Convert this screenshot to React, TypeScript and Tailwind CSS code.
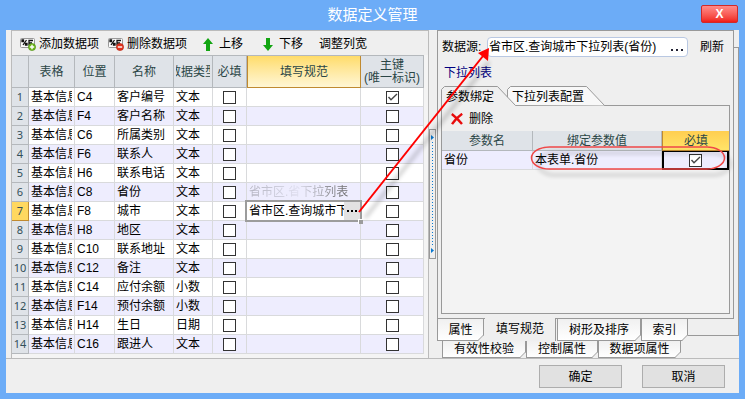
const rows: [string, string, string, boolean][] = [
  ['C4', '客户编号', '文本', true],
  ['F4', '客户名称', '文本', false],
  ['C6', '所属类别', '文本', false],
  ['F6', '联系人', '文本', false],
  ['H6', '联系电话', '文本', false],
  ['C8', '省份', '文本', false],
  ['F8', '城市', '文本', false],
  ['H8', '地区', '文本', false],
  ['C10', '联系地址', '文本', false],
  ['C12', '备注', '文本', false],
  ['C14', '应付余额', '小数', false],
  ['F14', '预付余额', '小数', false],
  ['H14', '生日', '日期', false],
  ['C16', '跟进人', '文本', false],
];

function Check({ label, checked = false }: { label: string; checked?: boolean }) {
  return (
    <label className="mx-auto grid size-[13px]">
      <input
        type="checkbox"
        aria-label={label}
        defaultChecked={checked}
        className="peer size-[13px] appearance-none border border-[#333] bg-white [grid-area:1/1]"
      />
      <svg viewBox="0 0 13 13" className="pointer-events-none hidden size-[13px] [grid-area:1/1] peer-checked:block">
        <path d="M2.5 6 5 8.7 11 3" fill="none" stroke="#444" strokeWidth="1.4" />
      </svg>
    </label>
  );
}

function TableIcon({ kind }: { kind: 'add' | 'remove' }) {
  return (
    <svg width="16" height="13" viewBox="0 0 16 13" className="shrink-0">
      <rect x="0.5" y="0.5" width="14" height="9" rx="1" fill="#fafafa" stroke="#999" />
      <path d="M2 2h1.5v1.5H2zM6.5 2 3 7M5.5 5.5H7V7H5.5zM9 7.5v-5h4M9 5h3" fill="none" stroke="#111" strokeWidth="1.3" />
      <circle cx="12" cy="9" r="3.6" fill={kind === 'add' ? '#6fb51c' : '#e0321c'} stroke={kind === 'add' ? '#4c9010' : '#b8200c'} strokeWidth="0.6" />
      <path d={kind === 'add' ? 'M9.8 9h4.4M12 6.8v4.4' : 'M9.8 9h4.4'} stroke="#fff" strokeWidth="1.4" />
    </svg>
  );
}

function MoveIcon({ down = false }: { down?: boolean }) {
  return (
    <svg width="10" height="13" viewBox="0 0 10 13" className="shrink-0">
      <path d={down ? 'M3 0h4v7h3L5 13 0 7h3z' : 'M3 13h4V6h3L5 0 0 6h3z'} fill="#12a512" />
    </svg>
  );
}

function SplitArrow() {
  return (
    <svg width="3" height="5" viewBox="0 0 3 5">
      <path d="M0 0 3 2.5 0 5z" fill="#0878d0" />
    </svg>
  );
}

function BottomTab({ text, className }: { text: string; className: string }) {
  return (
    <button
      type="button"
      role="tab"
      className={'relative flex shrink-0 items-center justify-center border border-[#999] bg-linear-to-b from-[#f0f0f0] to-white ' + className}
    >
      {text}
      <svg width="6" height="6" viewBox="0 0 6 6" className="absolute -right-px -bottom-px">
        <path d="M6 0v6H0z" fill="#efefef" />
        <path d="M5.5 0 0 5.5" stroke="#999" />
      </svg>
    </button>
  );
}

const head = 'overflow-hidden border-r border-b border-[#b4b8bc] bg-[#dfe3e8] p-0 font-normal text-[#2b4646]';
const cell = 'overflow-hidden border-r border-b border-[#d9dadc] px-[2px] py-0 whitespace-nowrap';

export default function App() {
  return (
    <div className="pr-px pb-px font-['Liberation_Sans','Noto_Sans_CJK_SC',sans-serif] text-xs leading-[18px] text-black">
      <div className="relative bg-[#6cacf7] px-[6px] pb-[6px]">
        <header className="flex h-[30px] items-center">
          <h1 className="flex-1 text-center text-[15px] text-white">数据定义管理</h1>
          <button
            type="button"
            className="absolute top-[5px] right-[7px] h-[18px] w-[37px] rounded-xs border border-[#d02a2a] bg-linear-to-b from-[#ff8a8a] to-[#f01818] text-xs leading-4 font-bold text-white"
          >
            X
          </button>
        </header>

        <main className="bg-[#efefef]">
          <div className="flex border-b border-[#bbb] pl-[5px]">
            <section className="min-w-0 flex-1 border-x border-t border-[#bbb] bg-[#f4f4f4]">
              <div className="flex h-6 items-center bg-[#efefef] pt-[2px] pl-2 whitespace-nowrap">
                <button type="button" className="flex items-center gap-[3px]"><TableIcon kind="add" />添加数据项</button>
                <button type="button" className="ml-[9px] flex items-center gap-[3px]"><TableIcon kind="remove" />删除数据项</button>
                <button type="button" className="ml-4 flex items-center gap-[6px]"><MoveIcon />上移</button>
                <button type="button" className="ml-5 flex items-center gap-[6px]"><MoveIcon down />下移</button>
                <button type="button" className="ml-4">调整列宽</button>
              </div>
              <div className="pr-1 pb-1">
                <table className="w-full table-fixed border-separate border-spacing-0 border-t border-[#b4b8bc]">
                  <colgroup>
                    <col className="w-[17px]" />
                    <col className="w-[46px]" />
                    <col className="w-10" />
                    <col className="w-[59px]" />
                    <col className="w-[39px]" />
                    <col className="w-[34px]" />
                    <col />
                    <col className="w-[63px]" />
                  </colgroup>
                  <thead>
                    <tr className="h-8">
                      <th className={head} />
                      <th className={head}>表格</th>
                      <th className={head}>位置</th>
                      <th className={head}>名称</th>
                      <th className={head}>
                        <div className="mx-[2px] flex justify-center overflow-hidden whitespace-nowrap"><span className="shrink-0">数据类型</span></div>
                      </th>
                      <th className={head}>必填</th>
                      <th className="border-r border-b border-l border-[#c08a30] bg-linear-to-b from-[#ffdc68] to-[#fff6d4] p-0 font-normal text-[#2b4646]">填写规范</th>
                      <th className={head + ' leading-[13px]'}>主键<br />(唯一标识)</th>
                    </tr>
                  </thead>
                  <tbody>
                    {rows.map(([pos, name, type, key], i) => (
                      <tr key={pos} className="h-[19px] odd:bg-white even:bg-[#eeedfe]">
                        <th
                          className={
                            i === 6
                              ? "border-r border-b border-[#c08a30] bg-[#ffd860] p-0 font-['Noto_Sans',sans-serif] text-[11px] font-normal text-[#33505a]"
                              : "border-r border-b border-[#b4b8bc] bg-[#dfe3e8] p-0 font-['Noto_Sans',sans-serif] text-[11px] font-normal text-[#33505a]"
                          }
                        >
                          {i + 1}
                        </th>
                        <td className={cell}><div className="overflow-hidden">基本信息</div></td>
                        <td className={cell}>{pos}</td>
                        <td className={cell}>{name}</td>
                        <td className={cell}>{type}</td>
                        <td className={cell}><Check label={name + ' 必填'} /></td>
                        {i === 6 ? (
                          <td className="relative border-r border-b border-[#d9dadc] p-0">
                            <div className="absolute -top-[2px] -right-[2px] -bottom-[2px] -left-[2px] flex border-2 border-[#9c9c9c] bg-white">
                              <input aria-label="填写规范" defaultValue="省市区.查询城市下拉列表(省份)" className="min-w-0 flex-1 bg-transparent pl-[2px] outline-none" />
                              <button type="button" aria-label="选择" className="flex w-4 items-center justify-center gap-[2px] bg-[#e2e2e2]">
                                {[0, 1, 2].map((d) => <span key={d} className="size-[2px] bg-black" />)}
                              </button>
                            </div>
                            <span className="absolute -right-[3px] -bottom-[4px] size-[5px] border-t border-l border-white bg-[#9c9c9c]" />
                          </td>
                        ) : (
                          <td className={cell}>
                            {i === 5 && (
                              <span className="bg-linear-to-r from-[#b4b4c0] via-[#dfdfef] via-50% to-[#666] bg-clip-text text-transparent">省市区.省下拉列表</span>
                            )}
                          </td>
                        )}
                        <td className={cell}><Check label={name + ' 主键'} checked={key} /></td>
                      </tr>
                    ))}
                  </tbody>
                </table>
              </div>
            </section>

            <div className="w-2 shrink-0 pt-[99px]">
              <div className="flex h-[130px] w-[7px] flex-col items-center justify-between border border-[#999] py-[5px]">
                <SplitArrow />
                <div className="h-[104px] w-px bg-[repeating-linear-gradient(#0878d0_0_1px,transparent_1px_3px)]" />
                <SplitArrow />
              </div>
            </div>

            <section className="flex w-[302px] shrink-0 flex-col">
              <div className="flex">
                <div className="w-[297px] border border-[#999] px-[3px] pb-1">
                  <div className="flex h-[31px] items-center pl-px">
                    <label htmlFor="source" className="w-[45px]">数据源:</label>
                    <div className="flex h-5 w-[201px] items-center rounded-sm border border-[#b9c8e2] bg-white">
                      <input id="source" defaultValue="省市区.查询城市下拉列表(省份)" className="min-w-0 flex-1 bg-transparent pl-px outline-none" />
                      <button type="button" aria-label="浏览" className="flex w-4 items-end gap-[3px] pt-[7px]">
                        {[0, 1, 2].map((d) => <span key={d} className="size-[2px] bg-[#223]" />)}
                      </button>
                    </div>
                    <button type="button" className="ml-3">刷新</button>
                  </div>
                  <h2 className="h-6 pt-[2px] pl-[3px] text-[#000080]">下拉列表</h2>
                  <div role="tablist" className="relative z-10 -mb-px flex h-5">
                    <button type="button" role="tab" aria-selected="true" className="relative z-10 w-[75px] pt-[2px] pl-[5px] text-left">
                      <svg width="75" height="20" viewBox="0 0 75 20" className="absolute inset-0 -z-10">
                        <path d="M0.5 20V3.5l3-3H56.5L74.5 19.5V20z" fill="#efefef" />
                        <path d="M0.5 20V3.5l3-3H56.5L74.5 19.5" fill="none" stroke="#999" />
                      </svg>
                      参数绑定
                    </button>
                    <button type="button" role="tab" className="relative -ml-[9px] w-[98px] pt-[2px] pl-[5px] text-left">
                      <svg width="98" height="20" viewBox="0 0 98 20" className="absolute inset-0 -z-10">
                        <path d="M0.5 19V3.5l3-3H79.5L97.5 19.5" fill="#f8f8f8" stroke="#999" />
                      </svg>
                      下拉列表配置
                    </button>
                  </div>
                  <div className="h-[209px] border border-[#999] bg-[#f3f3f3]">
                    <div className="flex h-[25px] items-center bg-[#efefef] pl-[9px]">
                      <button type="button" className="flex items-center gap-[6px]">
                        <svg width="12" height="12" viewBox="0 0 12 12"><path d="M0.8 1Q6 5 11 11M11.2 0.8Q5 5 1 11.2" fill="none" stroke="#e80c0c" strokeWidth="2.4" /></svg>
                        删除
                      </button>
                    </div>
                    <table className="w-full table-fixed border-separate border-spacing-0">
                      <colgroup><col className="w-[91px]" /><col className="w-[129px]" /><col /></colgroup>
                      <thead>
                        <tr className="h-5">
                          <th className={head}>参数名</th>
                          <th className={head}>绑定参数值</th>
                          <th className="border-b border-l border-[#c08a30] bg-linear-to-b from-[#ffce50] to-[#ffe468] p-0 font-normal text-[#2b4646]">必填</th>
                        </tr>
                      </thead>
                      <tbody>
                        <tr className="h-[19px] bg-[#eeedfe]">
                          <td className={cell}>省份</td>
                          <td className={cell}>本表单.省份</td>
                          <td className="border-2 border-t border-black p-0"><Check label="省份必填" checked /></td>
                        </tr>
                      </tbody>
                    </table>
                  </div>
                </div>
                <div className="mt-[17px] flex-1 border-t border-r border-[#999]" />
              </div>
              <div className="relative -mt-px flex h-[23px]">
                <div className="absolute -top-px right-0 h-[19px] w-[51px] border-r border-b border-[#999]" />
                <BottomTab text="属性" className="w-[47px]" />
                <button type="button" role="tab" aria-selected="true" className="relative z-10 ml-px w-[71px] border-r border-[#999] bg-[#efefef] pb-[2px]">填写规范</button>
                <BottomTab text="树形及排序" className="ml-px w-[84px]" />
                <BottomTab text="索引" className="w-[47px]" />
              </div>
              <div className="flex h-[17px] pl-[5px]">
                <BottomTab text="有效性校验" className="w-[84px] border-t-0" />
                <BottomTab text="控制属性" className="w-[72px] border-t-0" />
                <BottomTab text="数据项属性" className="w-[83px] border-t-0" />
              </div>
            </section>
          </div>
          <footer className="flex justify-end gap-5 pt-[6px] pr-[14px] pb-[5px]">
            <button type="button" className="h-[23px] w-[83px] border border-[#adadad] bg-[#e1e1e1]">确定</button>
            <button type="button" className="h-[23px] w-[83px] border border-[#adadad] bg-[#e1e1e1]">取消</button>
          </footer>
        </main>

        <svg width="400" height="230" viewBox="345 0 400 230" className="pointer-events-none absolute top-0 right-0 z-20">
          <g opacity="0.22" stroke="#000" fill="none" transform="translate(6 6)" className="blur-[2px]">
            <path d="M359 212 483 56" strokeWidth="3" />
            <rect x="532" y="147" width="192" height="22" rx="18" ry="11" strokeWidth="2" />
          </g>
          <path d="M359 212 483 56" stroke="#f00" strokeWidth="2" />
          <path d="M489 48 478 53 488 61z" fill="#f00" />
          <rect x="531.5" y="147" width="193" height="22" rx="18" ry="11" fill="none" stroke="#f04848" strokeWidth="1.5" />
        </svg>
      </div>
    </div>
  );
}
